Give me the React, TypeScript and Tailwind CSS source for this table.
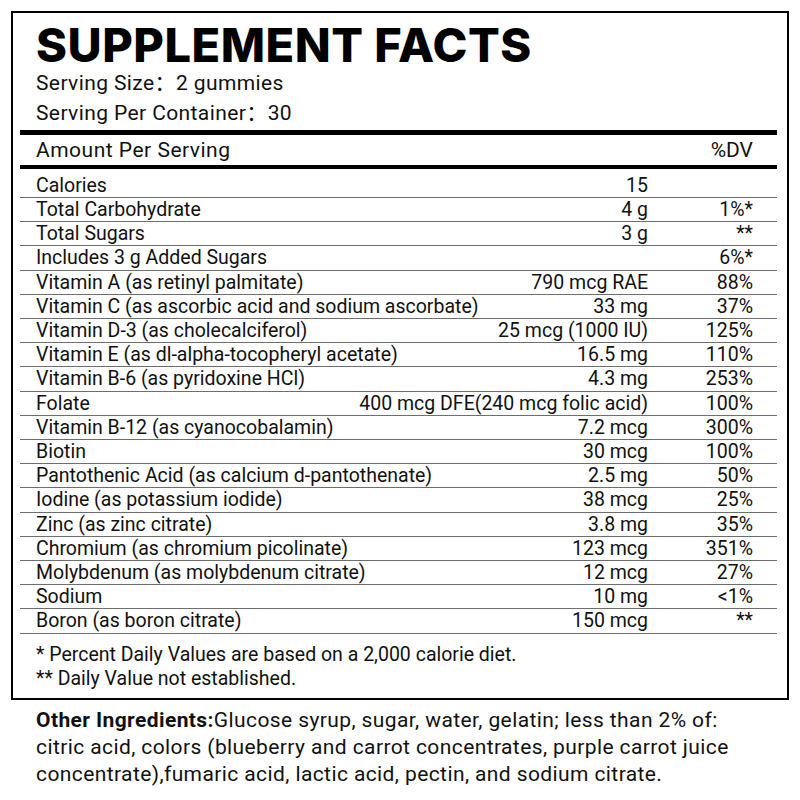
const rows: [string, string, string][] = [
  ['Calories', '15', ''],
  ['Total Carbohydrate', '4 g', '1%*'],
  ['Total Sugars', '3 g', '**'],
  ['Includes 3 g Added Sugars', '', '6%*'],
  ['Vitamin A (as retinyl palmitate)', '790 mcg RAE', '88%'],
  ['Vitamin C (as ascorbic acid and sodium ascorbate)', '33 mg', '37%'],
  ['Vitamin D-3 (as cholecalciferol)', '25 mcg (1000 IU)', '125%'],
  ['Vitamin E (as dl-alpha-tocopheryl acetate)', '16.5 mg', '110%'],
  ['Vitamin B-6 (as pyridoxine HCl)', '4.3 mg', '253%'],
  ['Folate', '400 mcg DFE(240 mcg folic acid)', '100%'],
  ['Vitamin B-12 (as cyanocobalamin)', '7.2 mcg', '300%'],
  ['Biotin', '30 mcg', '100%'],
  ['Pantothenic Acid (as calcium d-pantothenate)', '2.5 mg', '50%'],
  ['Iodine (as potassium iodide)', '38 mcg', '25%'],
  ['Zinc (as zinc citrate)', '3.8 mg', '35%'],
  ['Chromium (as chromium picolinate)', '123 mcg', '351%'],
  ['Molybdenum (as molybdenum citrate)', '12 mcg', '27%'],
  ['Sodium', '10 mg', '<1%'],
  ['Boron (as boron citrate)', '150 mcg', '**'],
];

const body = "font-['Roboto','Noto_Sans_CJK_SC',sans-serif]";

export default function App() {
  return (
    <div className={`w-[800px] h-[800px] bg-white text-[#111] ${body}`}>
      <div className="ml-[11px] mt-[11px] w-[778px] h-[689px] border-2 border-black pl-[7px] pr-[10px]">
        <div className="pl-4">
          <h1 className="font-['Inter',sans-serif] font-extrabold text-[47px] leading-none tracking-[0.5px] pt-[8px] text-black">
            SUPPLEMENT FACTS
          </h1>
          <div className="text-[21px] leading-[30px] tracking-[0.4px]">
            <div>Serving Size：2 gummies</div>
            <div>Serving Per Container：30</div>
          </div>
        </div>
        <div className="h-[5px] bg-black mt-[2px]" />
        <div className="flex justify-between pl-4 pr-6 h-[30px] text-[21px] leading-[30px]">
          <span className="tracking-[0.5px]">Amount Per Serving</span>
          <span>%DV</span>
        </div>
        <div className="h-[4px] bg-black" />
        <div className="text-[19.5px]">
          {rows.map(([name, amount, dv], i) => (
            <div
              key={name}
              className={`flex border-b border-[#6e6e6e] pl-4 pr-6 leading-[23.2px] ${i === 0 ? 'pt-[4.8px]' : ''}`}
            >
              <span className="flex-1">{name}</span>
              <span className="text-right">{amount}</span>
              <span className="w-[105px] text-right">{dv}</span>
            </div>
          ))}
        </div>
        <div className="pl-4 pt-[9.5px] text-[19.5px] leading-[24px]">
          <div>* Percent Daily Values are based on a 2,000 calorie diet.</div>
          <div>** Daily Value not established.</div>
        </div>
      </div>
      <p className="pl-[36px] pt-[7px] text-[21px] leading-[27px] tracking-[0.4px] whitespace-nowrap">
        <span className="font-bold">Other Ingredients:</span>Glucose syrup, sugar, water, gelatin; less than 2% of:
        <br />
        citric acid, colors (blueberry and carrot concentrates, purple carrot juice
        <br />
        concentrate),fumaric acid, lactic acid, pectin, and sodium citrate.
      </p>
    </div>
  );
}
